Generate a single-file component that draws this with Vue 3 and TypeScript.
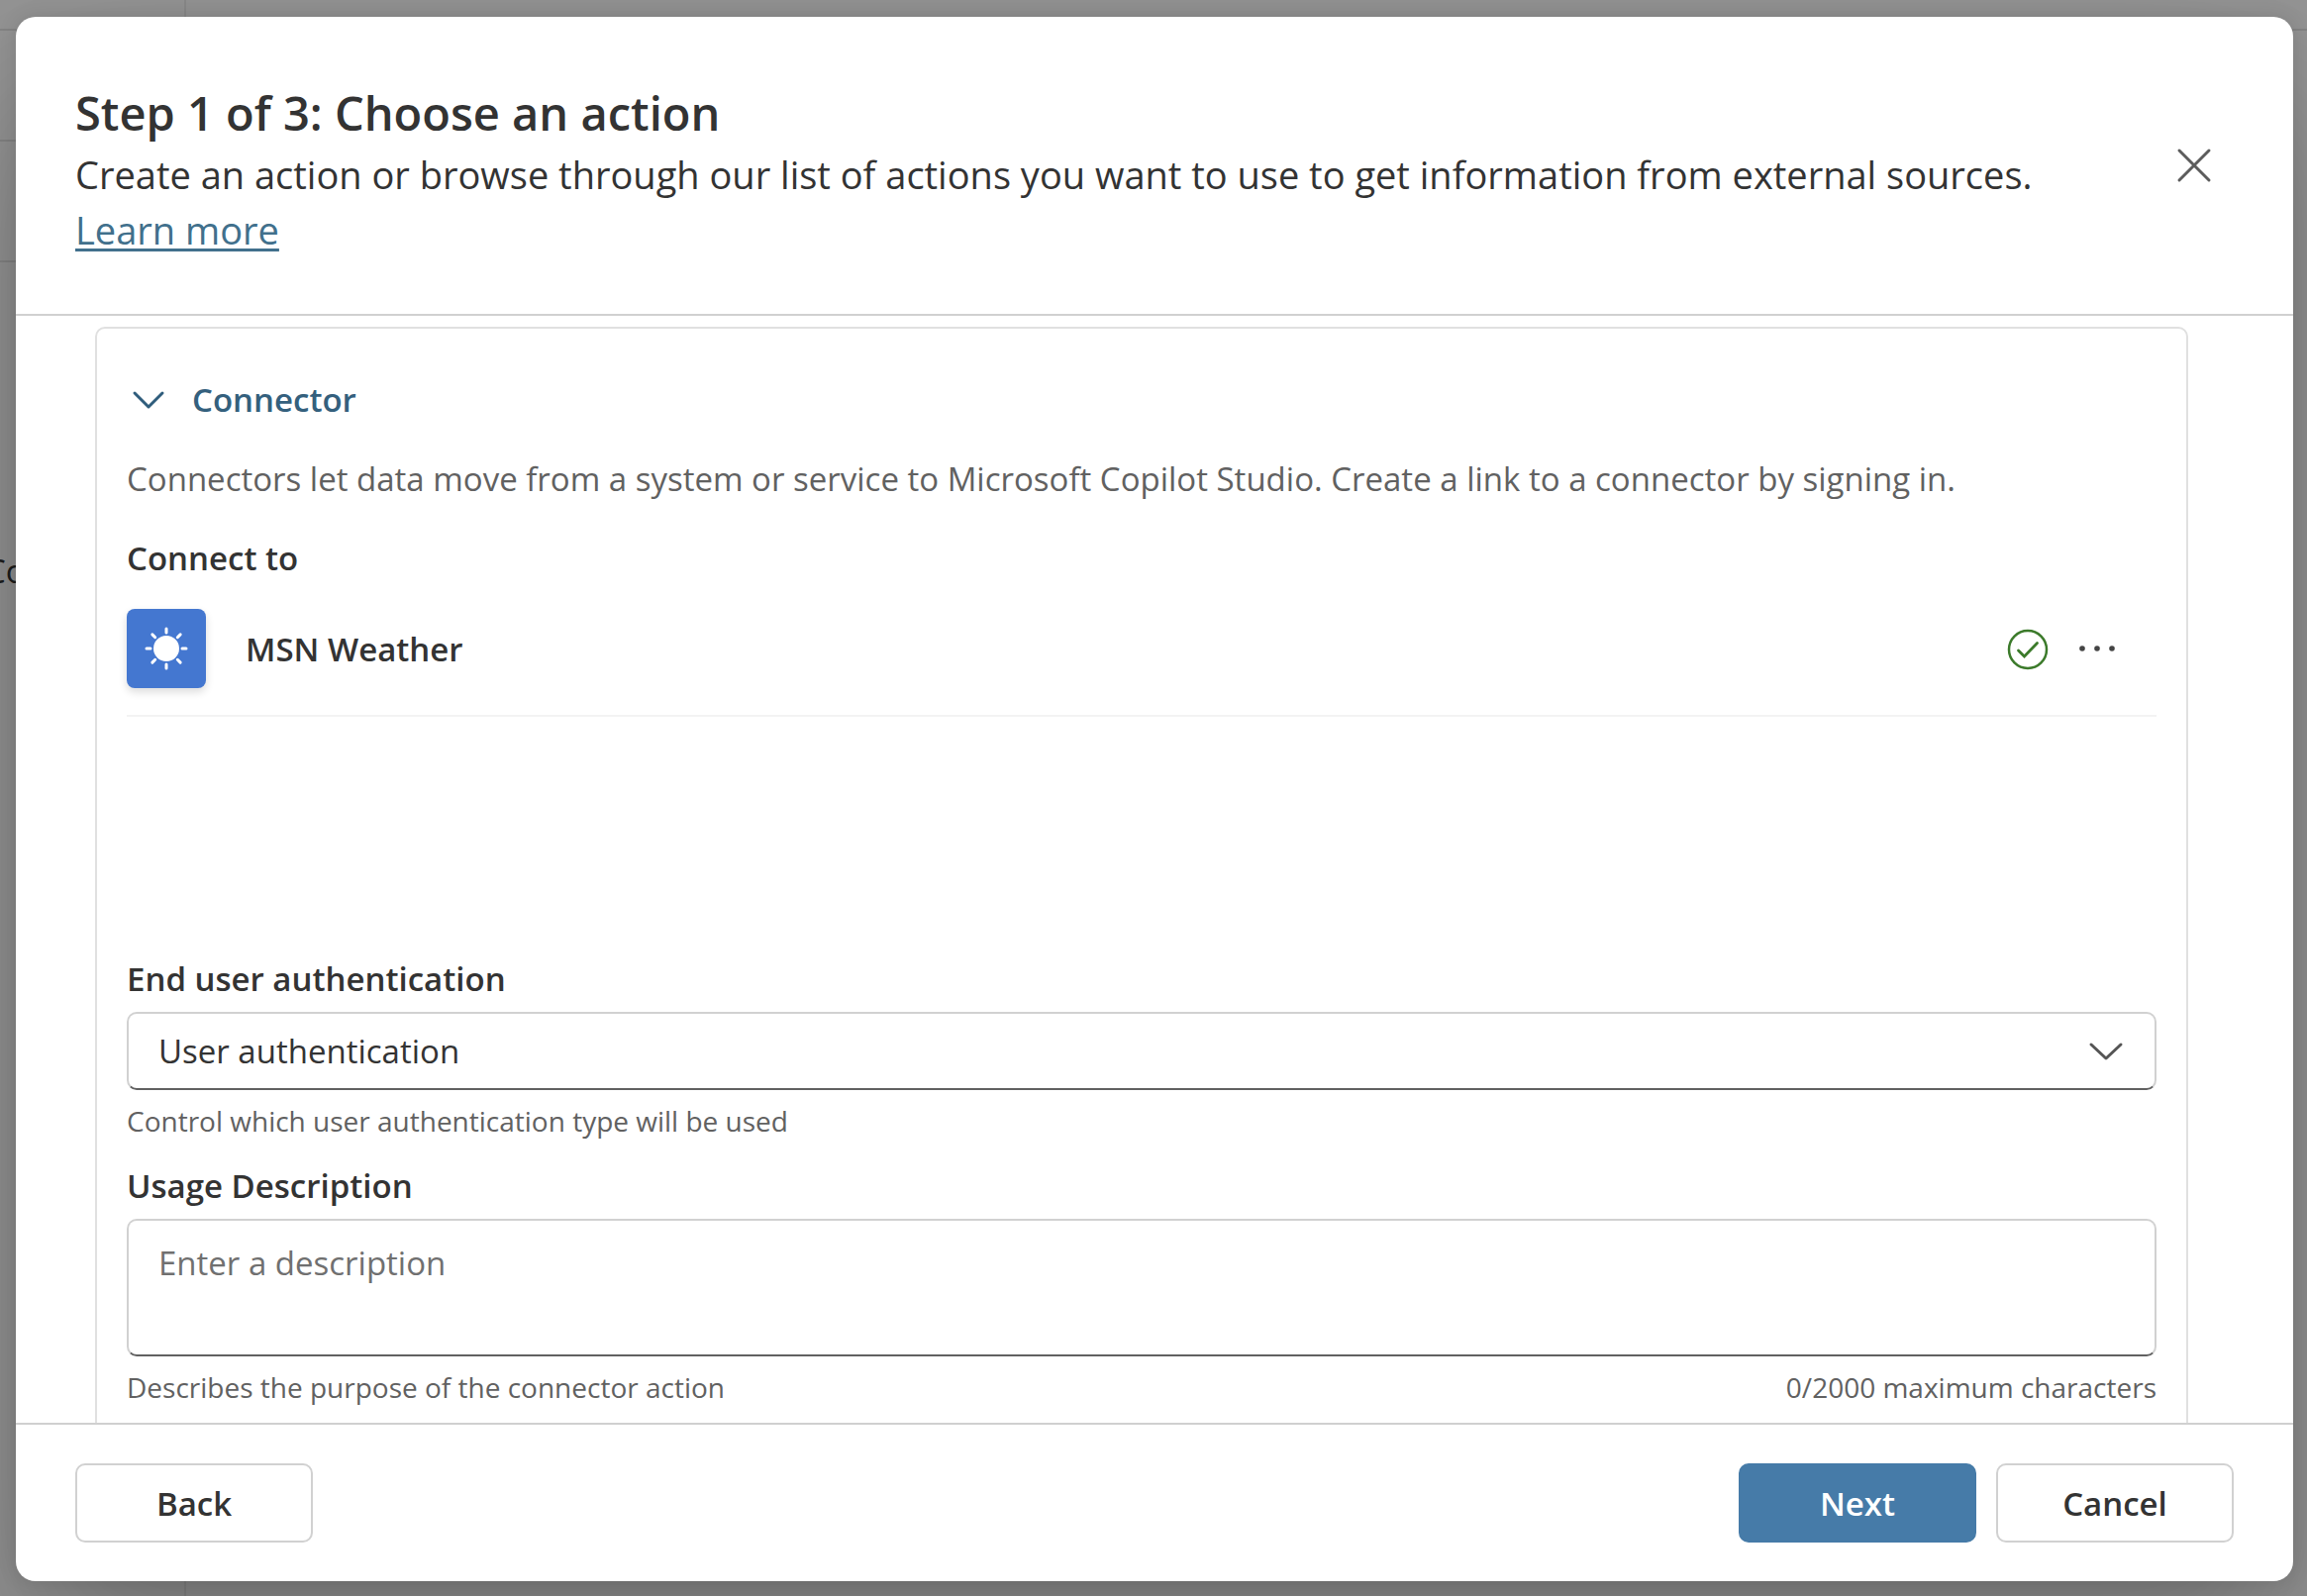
<script setup lang="ts">
import { computed, ref } from 'vue'

const maxLength = 2000
const expanded = ref(true)
const authentication = ref('user')
const description = ref('')
const counter = computed(() => `${description.value.length}/${maxLength} maximum characters`)
const rays = [0, 45, 90, 135, 180, 225, 270, 315]
</script>

<template>
  <div class="page">
    <div class="backdrop-page" aria-hidden="true">
      <div class="sidebar">
        <div class="side-row top"></div>
        <div class="side-row first"></div>
        <div class="side-row second"></div>
        <div class="side-label">Co</div>
      </div>
      <div class="workspace">
        <div class="side-row top"></div>
      </div>
    </div>

    <div class="overlay">
      <section class="dialog" role="dialog" aria-modal="true" aria-labelledby="dialog-title">
        <header class="header">
          <div class="heading">
            <h1 id="dialog-title" class="title">Step 1 of 3: Choose an action</h1>
            <p class="subtitle">
              Create an action or browse through our list of actions you want to use to get information from external sources.
              <br /><a class="learn" href="#">Learn more</a>
            </p>
          </div>
          <button class="icon-button close" type="button" aria-label="Close">
            <svg width="40" height="40" viewBox="0 0 40 40" fill="none" stroke="#5c5c5c" stroke-width="3" stroke-linecap="round">
              <path d="M5 5 35 35M35 5 5 35" />
            </svg>
          </button>
        </header>

        <main class="content">
          <div class="card">
            <button class="icon-button toggle" type="button" :aria-expanded="expanded" @click="expanded = !expanded">
              <svg width="46" height="40" viewBox="0 0 46 40" fill="none" stroke="#2f5d7c" stroke-width="3" stroke-linecap="round" stroke-linejoin="round">
                <path d="M8 13 22 27 36 13" />
              </svg>
              <span>Connector</span>
            </button>

            <div v-show="expanded" class="panel">
              <p class="intro">
                Connectors let data move from a system or service to Microsoft Copilot Studio. Create a link to a connector by signing in.
              </p>
              <h2 class="label">Connect to</h2>
              <div class="connection">
                <div class="tile">
                  <svg width="80" height="80" viewBox="0 0 80 80" stroke="#fff" stroke-width="3" stroke-linecap="round">
                    <circle cx="40" cy="40" r="13" fill="#fff" stroke="none" />
                    <path v-for="angle in rays" :key="angle" d="M40 24V20" :transform="`rotate(${angle} 40 40)`" />
                  </svg>
                </div>
                <span class="connection-name">MSN Weather</span>
                <svg class="status" width="44" height="44" viewBox="0 0 44 44" fill="none" stroke="#3b7a2a" role="img" aria-label="Connected">
                  <circle cx="22" cy="23" r="19" stroke-width="2.5" />
                  <path d="M12.5 24 18.5 30 31.5 16.5" stroke-width="2.8" stroke-linecap="round" />
                </svg>
                <button class="icon-button more" type="button" aria-label="More options">
                  <svg width="40" height="40" viewBox="0 0 40 40" fill="#444">
                    <circle cx="5" cy="20" r="2.8" />
                    <circle cx="20" cy="20" r="2.8" />
                    <circle cx="35" cy="20" r="2.8" />
                  </svg>
                </button>
              </div>

              <div class="field">
                <label class="label" for="auth">End user authentication</label>
                <div class="select-wrap">
                  <select id="auth" v-model="authentication" class="control select">
                    <option value="user">User authentication</option>
                    <option value="maker">Copilot author authentication</option>
                  </select>
                  <svg class="select-icon" width="48" height="40" viewBox="0 0 48 40" fill="none" stroke="#555" stroke-width="3" stroke-linecap="round" stroke-linejoin="round">
                    <path d="M9 13 24 27 39 13" />
                  </svg>
                </div>
                <div class="hint">Control which user authentication type will be used</div>
              </div>

              <div class="field">
                <label class="label" for="usage">Usage Description</label>
                <textarea id="usage" v-model="description" class="control textarea" :maxlength="maxLength" placeholder="Enter a description"></textarea>
                <div class="hint">
                  <span>Describes the purpose of the connector action</span>
                  <span>{{ counter }}</span>
                </div>
              </div>
            </div>
          </div>
        </main>

        <footer class="footer">
          <button class="button" type="button">Back</button>
          <div class="footer-end">
            <button class="button primary" type="button">Next</button>
            <button class="button" type="button">Cancel</button>
          </div>
        </footer>
      </section>
    </div>
  </div>
</template>

<style>
body {
  margin: 0;
  overflow: hidden;
}
</style>

<style scoped>
.page,
.page * {
  box-sizing: border-box;
}

.page {
  position: relative;
  height: 100vh;
  overflow: hidden;
  background: #f7f7f7;
  color: #333;
  font-family: 'Open Sans', 'Noto Sans', sans-serif;
  font-size: 33px;
  line-height: 50px;
}

h1,
h2,
p {
  margin: 0;
}

button,
select,
textarea {
  font: inherit;
  color: inherit;
}

.backdrop-page {
  display: flex;
  height: 100%;
}

.sidebar {
  width: 188px;
  overflow: hidden;
  border-right: 2px solid #e6e6e6;
}

.workspace {
  flex: 1;
}

.side-row {
  border-bottom: 2px solid #dedede;
}

.top {
  height: 31px;
}

.first {
  height: 112px;
}

.second {
  height: 122px;
}

.side-label {
  padding-top: 287px;
  text-indent: -15px;
}

.overlay {
  position: absolute;
  inset: 0;
  display: flex;
  padding: 17px 14px 15px 16px;
  background: rgba(0, 0, 0, 0.4);
}

.dialog {
  display: flex;
  flex: 1;
  flex-direction: column;
  min-width: 0;
  overflow: hidden;
  border-radius: 20px;
  background: #fff;
  box-shadow: 0 0 20px rgba(0, 0, 0, 0.12), 0 80px 160px rgba(0, 0, 0, 0.24);
}

.header {
  display: flex;
  align-items: center;
  justify-content: space-between;
  height: 302px;
  padding: 0 80px 0 60px;
  border-bottom: 2px solid #d0d0d0;
}

.heading {
  padding-top: 6px;
}

.title {
  font-size: 47px;
  font-weight: 600;
  line-height: 68px;
}

.subtitle {
  font-size: 38px;
  line-height: 56px;
}

.learn {
  color: #41708c;
  text-decoration-thickness: 3px;
  text-underline-offset: 4px;
}

.icon-button {
  display: flex;
  align-items: center;
  padding: 0;
  border: 0;
  background: none;
  cursor: pointer;
}

.content {
  flex: 1;
  min-height: 0;
  overflow-y: auto;
  scrollbar-width: none;
  padding: 11px 106px 0 80px;
}

.card {
  padding: 47px 30px;
  border: 2px solid #e0e0e0;
  border-radius: 10px;
}

.toggle {
  gap: 20px;
  color: #34607d;
  font-weight: 600;
}

.intro {
  margin-top: 30px;
  color: #616161;
}

.label {
  display: block;
  font-size: 33px;
  font-weight: 600;
  line-height: 50px;
}

.intro + .label {
  margin-top: 30px;
}

.connection {
  display: flex;
  align-items: center;
  margin: 26px 0 240px;
  padding: 0 40px 27px 0;
  border-bottom: 2px solid #f3f3f3;
}

.tile {
  width: 80px;
  height: 80px;
  border-radius: 8px;
  background: #4477d0;
  box-shadow: 0 4px 8px rgba(0, 0, 0, 0.14);
}

.connection-name {
  flex: 1;
  margin-left: 40px;
  padding-top: 2px;
  font-weight: 600;
}

.more {
  margin-left: 28px;
}

.field {
  margin-bottom: 20px;
}

.select-wrap {
  position: relative;
}

.control {
  display: block;
  width: 100%;
  margin-top: 8px;
  padding: 0 30px;
  border: 2px solid #d1d1d1;
  border-bottom-color: #616161;
  border-radius: 10px;
  outline: 0;
  background: #fff;
}

.select {
  height: 79px;
  appearance: none;
}

.select-icon {
  position: absolute;
  top: 20px;
  right: 27px;
  pointer-events: none;
}

.textarea {
  height: 139px;
  padding-top: 18px;
  resize: none;
}

.textarea::placeholder {
  color: #707070;
  opacity: 1;
}

.hint {
  display: flex;
  justify-content: space-between;
  margin-top: 10px;
  color: #616161;
  font-size: 28px;
  line-height: 42px;
}

.footer {
  display: flex;
  align-items: center;
  justify-content: space-between;
  height: 160px;
  padding: 0 60px;
  border-top: 2px solid #d0d0d0;
}

.footer-end {
  display: flex;
  gap: 20px;
}

.button {
  width: 240px;
  height: 80px;
  padding: 2px 0 0;
  border: 2px solid #d1d1d1;
  border-radius: 10px;
  background: #fff;
  font-weight: 600;
}

.primary {
  border-color: #467ba8;
  background: #467ba8;
  color: #fff;
}
</style>
